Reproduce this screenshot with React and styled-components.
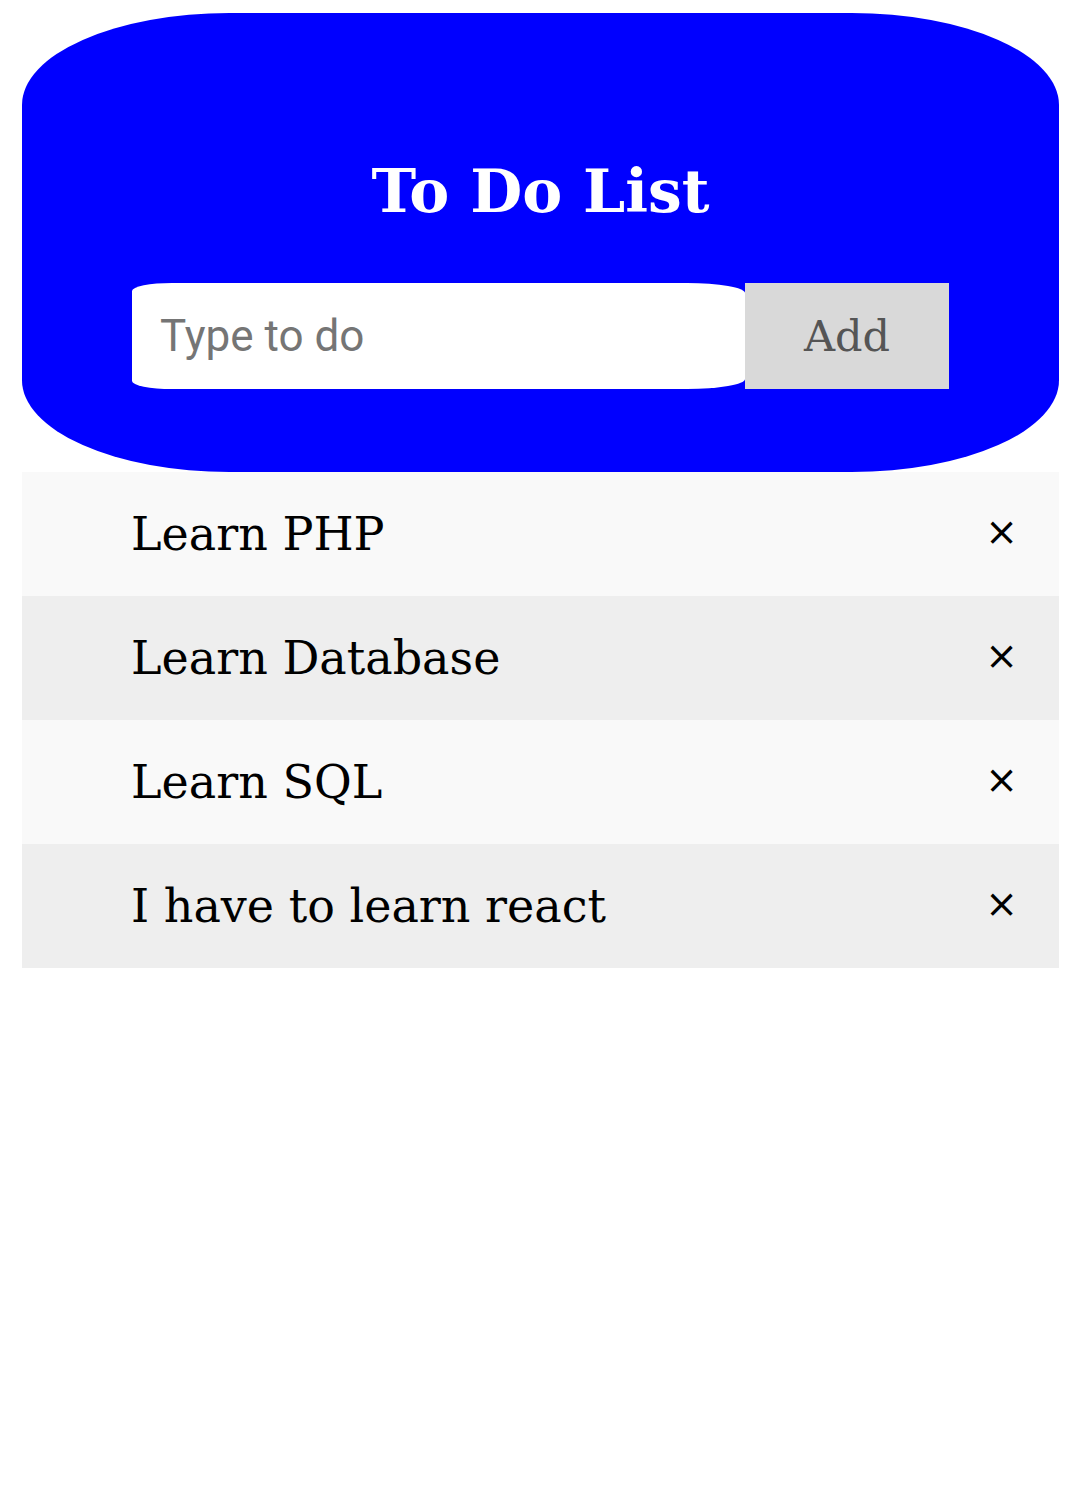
import React, { useState } from 'react'
import styled, { createGlobalStyle } from 'styled-components'

const GlobalStyle = createGlobalStyle`
  body {
    margin: 0;
    background: #fff;
    font-family: "DejaVu Serif", serif;
  }
`

const Page = styled.div`
  padding: 13px 21px 0 22px;
`

const Header = styled.div`
  display: flex;
  flex-direction: column;
  align-items: center;
  height: 459px;
  box-sizing: border-box;
  padding-top: 148px;
  background: #00f;
  border-radius: 20%;
`

const Title = styled.h1`
  margin: 0 0 62px;
  font-family: "DejaVu Serif", serif;
  font-size: 60px;
  line-height: 1;
  font-weight: bold;
  color: #fff;
`

const Form = styled.form`
  display: flex;
`

const Input = styled.input`
  width: 613px;
  height: 106px;
  box-sizing: border-box;
  padding: 0 0 0 28px;
  border: none;
  outline: none;
  border-radius: 40px 58px 58px 40px / 8px 10px 10px 8px;
  font-family: Roboto, sans-serif;
  font-size: 44px;
  color: #333;
  &::placeholder {
    color: #757575;
  }
`

const AddButton = styled.button`
  width: 204px;
  height: 106px;
  border: none;
  background: #d9d9d9;
  color: #555;
  font-family: "DejaVu Serif", serif;
  font-size: 43px;
  cursor: pointer;
`

const List = styled.ul`
  margin: 0;
  padding: 0;
  list-style: none;
`

const Item = styled.li`
  display: flex;
  align-items: center;
  justify-content: space-between;
  height: 124px;
  padding: 0 41px 0 109px;
  background: ${p => (p.$odd ? '#eee' : '#f9f9f9')};
  font-family: "DejaVu Serif", serif;
  font-size: 46px;
  color: #000;
`

const Close = styled.span`
  margin-bottom: 6px;
  font-family: "DejaVu Sans", sans-serif;
  font-size: 39px;
  line-height: 1;
  cursor: pointer;
`

const initial = ['Learn PHP', 'Learn Database', 'Learn SQL', 'I have to learn react']

export default function App() {
  const [todos, setTodos] = useState(initial)
  const [text, setText] = useState('')

  const add = e => {
    e.preventDefault()
    if (!text.trim()) return
    setTodos([...todos, text])
    setText('')
  }

  return (
    <Page>
      <GlobalStyle />
      <Header>
        <Title>To Do List</Title>
        <Form onSubmit={add}>
          <Input
            placeholder='Type to do'
            value={text}
            onChange={e => setText(e.target.value)}
          />
          <AddButton type='submit'>Add</AddButton>
        </Form>
      </Header>
      <List>
        {todos.map((t, i) => (
          <Item key={i} $odd={i % 2 === 1}>
            {t}
            <Close onClick={() => setTodos(todos.filter((_, j) => j !== i))}>×</Close>
          </Item>
        ))}
      </List>
    </Page>
  )
}
